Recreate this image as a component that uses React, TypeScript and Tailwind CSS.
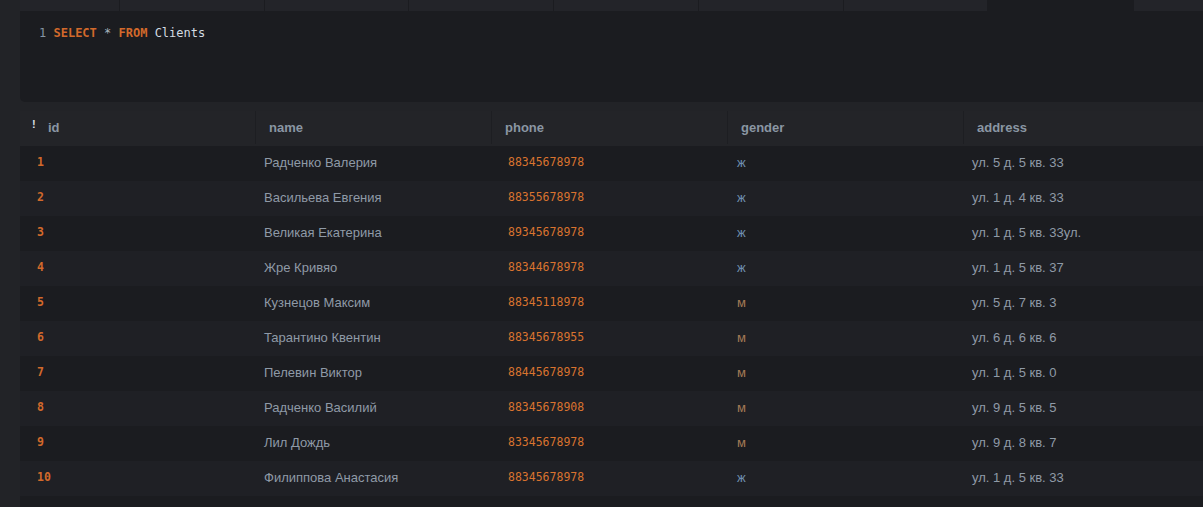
import React from 'react';

const rows = [
  { id: 1, name: 'Радченко Валерия', phone: '88345678978', gender: 'ж', address: 'ул. 5 д. 5 кв. 33' },
  { id: 2, name: 'Васильева Евгения', phone: '88355678978', gender: 'ж', address: 'ул. 1 д. 4 кв. 33' },
  { id: 3, name: 'Великая Екатерина', phone: '89345678978', gender: 'ж', address: 'ул. 1 д. 5 кв. 33ул.' },
  { id: 4, name: 'Жре Кривяо', phone: '88344678978', gender: 'ж', address: 'ул. 1 д. 5 кв. 37' },
  { id: 5, name: 'Кузнецов Максим', phone: '88345118978', gender: 'м', address: 'ул. 5 д. 7 кв. 3' },
  { id: 6, name: 'Тарантино Квентин', phone: '88345678955', gender: 'м', address: 'ул. 6 д. 6 кв. 6' },
  { id: 7, name: 'Пелевин Виктор', phone: '88445678978', gender: 'м', address: 'ул. 1 д. 5 кв. 0' },
  { id: 8, name: 'Радченко Василий', phone: '88345678908', gender: 'м', address: 'ул. 9 д. 5 кв. 5' },
  { id: 9, name: 'Лил Дождь', phone: '83345678978', gender: 'м', address: 'ул. 9 д. 8 кв. 7' },
  { id: 10, name: 'Филиппова Анастасия', phone: '88345678978', gender: 'ж', address: 'ул. 1 д. 5 кв. 33' },
];

const tabWidths = ['w-[99px]', 'w-[144px]', 'w-[143px]', 'w-[144px]', 'w-[144px]', 'w-[144px]', 'w-[143px]'];

const mono = { fontFamily: '"DejaVu Sans Mono", "Liberation Mono", monospace' };
const sans = { fontFamily: '"Liberation Sans", Arial, sans-serif' };

export default function App() {
  return (
    <div className="w-[1203px] h-[507px] bg-[#222327] pl-[20px] flex flex-col overflow-hidden" style={sans}>
      {/* tab strip */}
      <div className="flex h-[11px] gap-px bg-[#1b1c20] shrink-0">
        {tabWidths.map((w, i) => (
          <div key={i} className={`${w} bg-[#232429]`} />
        ))}
        <div className="w-[145px] bg-[#1b1c20]" />
        <div className="flex-1 bg-[#232429]" />
      </div>

      {/* editor */}
      <div className="h-[91px] bg-[#1b1c20] rounded-bl-[5px] shrink-0 pt-[14px] pl-[19px]">
        <div className="text-[12px] leading-[16px] whitespace-pre" style={mono}>
          <span className="text-[#8494a3]">1 </span>
          <span className="text-[#d2692b] font-bold">SELECT</span>
          <span className="text-[#a9b4bf]"> * </span>
          <span className="text-[#d2692b] font-bold">FROM</span>
          <span className="text-[#d4dbe2]"> Clients</span>
        </div>
      </div>

      <div className="h-[9px] shrink-0" />

      {/* results */}
      <div className="flex-1 flex flex-col bg-[#1b1c20]">
        <div className="grid grid-cols-[236px_236px_236px_236px_1fr] h-[35px] pb-[2px] bg-[#232428] text-[13px] font-bold text-[#8a96a3]">
          <div className="flex items-center pl-[12px] border-r border-[#1d1e22]">
            <span className="text-[#d8dde2] text-[11px] font-bold w-[16px] -mt-[7px]">!</span>
            <span>id</span>
          </div>
          <div className="flex items-center pl-[13px] border-r border-[#1d1e22]">name</div>
          <div className="flex items-center pl-[13px] border-r border-[#1d1e22]">phone</div>
          <div className="flex items-center pl-[13px] border-r border-[#1d1e22]">gender</div>
          <div className="flex items-center pl-[13px]">address</div>
        </div>

        {rows.map((r, i) => (
          <div
            key={r.id}
            className={`grid grid-cols-[236px_236px_236px_236px_1fr] h-[35px] pb-[2px] items-center ${i % 2 === 0 ? 'bg-[#1b1c20]' : 'bg-[#1f2025]'}`}
          >
            <div className="pl-[17px] text-[11.5px] font-bold text-[#d2692b]" style={mono}>{r.id}</div>
            <div className="pl-[8px] text-[13px] text-[#8f9aa7]">{r.name}</div>
            <div className="pl-[16px] text-[11.5px] text-[#d9732f]" style={mono}>{r.phone}</div>
            <div className={`pl-[9px] text-[13px] ${r.gender === 'ж' ? 'text-[#6f8fb0]' : 'text-[#a37a55]'}`}>{r.gender}</div>
            <div className="pl-[8px] text-[13px] text-[#8f9aa7]">{r.address}</div>
          </div>
        ))}
        <div className="flex-1 bg-[#1b1c20]" />
      </div>
    </div>
  );
}
